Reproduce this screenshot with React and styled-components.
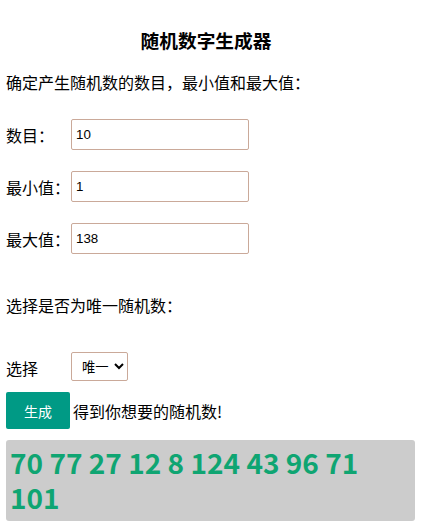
import styled, { createGlobalStyle } from "styled-components";
import { useState } from "react";

const GlobalStyle = createGlobalStyle`
  body {
    margin: 0;
    background: #fff;
    color: #000;
    font-family: "Noto Sans CJK SC", "Noto Sans", sans-serif;
  }
`;

const Page = styled.div`
  padding: 28px 8px 6px 6px;
`;

const Title = styled.h3`
  margin: 0 0 18px;
  padding-right: 9px;
  font-size: 18.7px;
  line-height: 24px;
  font-weight: bold;
  text-align: center;
`;

const Hint = styled.p`
  margin: 0;
  font-size: 16px;
  line-height: 24px;
`;

const Fields = styled.div`
  display: flex;
  flex-direction: column;
  gap: 21px;
  margin-top: 25px;
`;

const Field = styled.label`
  display: flex;
  align-items: center;
  font-size: 16px;

  span {
    width: 65px;
    flex: none;
  }
`;

const Input = styled.input`
  box-sizing: border-box;
  width: 178px;
  height: 31px;
  padding: 0 4px;
  border: 1px solid #caa999;
  border-radius: 2px;
  font-family: "Liberation Sans", Arial, sans-serif;
  font-size: 13.33px;
  color: #000;
  outline: none;
`;

const Section = styled(Hint)`
  margin-top: 39px;
`;

const ChoiceRow = styled(Field)`
  margin-top: 35px;

  span {
    padding-top: 3px;
  }
`;

const Select = styled.select`
  box-sizing: border-box;
  height: 29px;
  width: 57px;
  padding: 0 2px 0 6px;
  border: 1px solid #caa999;
  border-radius: 2px;
  background: #fff;
  font-family: "Noto Sans CJK SC", sans-serif;
  font-size: 13.33px;
  color: #000;
`;

const ActionRow = styled.div`
  display: flex;
  align-items: center;
  margin-top: 11px;
  font-size: 16px;
`;

const Button = styled.button`
  width: 64px;
  height: 37px;
  margin-right: 3px;
  border: none;
  border-radius: 2px;
  background: #009a85;
  color: #fff;
  font-family: "Noto Sans CJK SC", sans-serif;
  font-size: 14px;
  cursor: pointer;
`;

const Result = styled.div`
  margin-top: 11px;
  padding: 5px 6px 6px 4px;
  min-height: 70px;
  background: #cccccc;
  border-radius: 3px;
  color: #0fa572;
  font-size: 28px;
  line-height: 35px;
  font-weight: bold;
`;

function App() {
  const [count, setCount] = useState("10");
  const [min, setMin] = useState("1");
  const [max, setMax] = useState("138");
  const [unique, setUnique] = useState("unique");
  const [numbers, setNumbers] = useState([70, 77, 27, 12, 8, 124, 43, 96, 71, 101]);

  const generate = () => {
    const n = parseInt(count, 10) || 0;
    const lo = parseInt(min, 10) || 0;
    const hi = parseInt(max, 10) || 0;
    const out = [];
    let guard = 0;
    while (out.length < n && guard < 10000) {
      guard++;
      const v = lo + Math.floor(Math.random() * (hi - lo + 1));
      if (unique === "unique" && out.includes(v)) continue;
      out.push(v);
    }
    setNumbers(out);
  };

  return (
    <Page>
      <GlobalStyle />
      <Title>随机数字生成器</Title>
      <Hint>确定产生随机数的数目，最小值和最大值：</Hint>
      <Fields>
        <Field>
          <span>数目：</span>
          <Input value={count} onChange={(e) => setCount(e.target.value)} />
        </Field>
        <Field>
          <span>最小值：</span>
          <Input value={min} onChange={(e) => setMin(e.target.value)} />
        </Field>
        <Field>
          <span>最大值：</span>
          <Input value={max} onChange={(e) => setMax(e.target.value)} />
        </Field>
      </Fields>
      <Section>选择是否为唯一随机数：</Section>
      <ChoiceRow>
        <span>选择</span>
        <Select value={unique} onChange={(e) => setUnique(e.target.value)}>
          <option value="unique">唯一</option>
          <option value="repeat">可重复</option>
        </Select>
      </ChoiceRow>
      <ActionRow>
        <Button onClick={generate}>生成</Button>
        得到你想要的随机数!
      </ActionRow>
      <Result>{numbers.join(" ")}</Result>
    </Page>
  );
}

export default App;
